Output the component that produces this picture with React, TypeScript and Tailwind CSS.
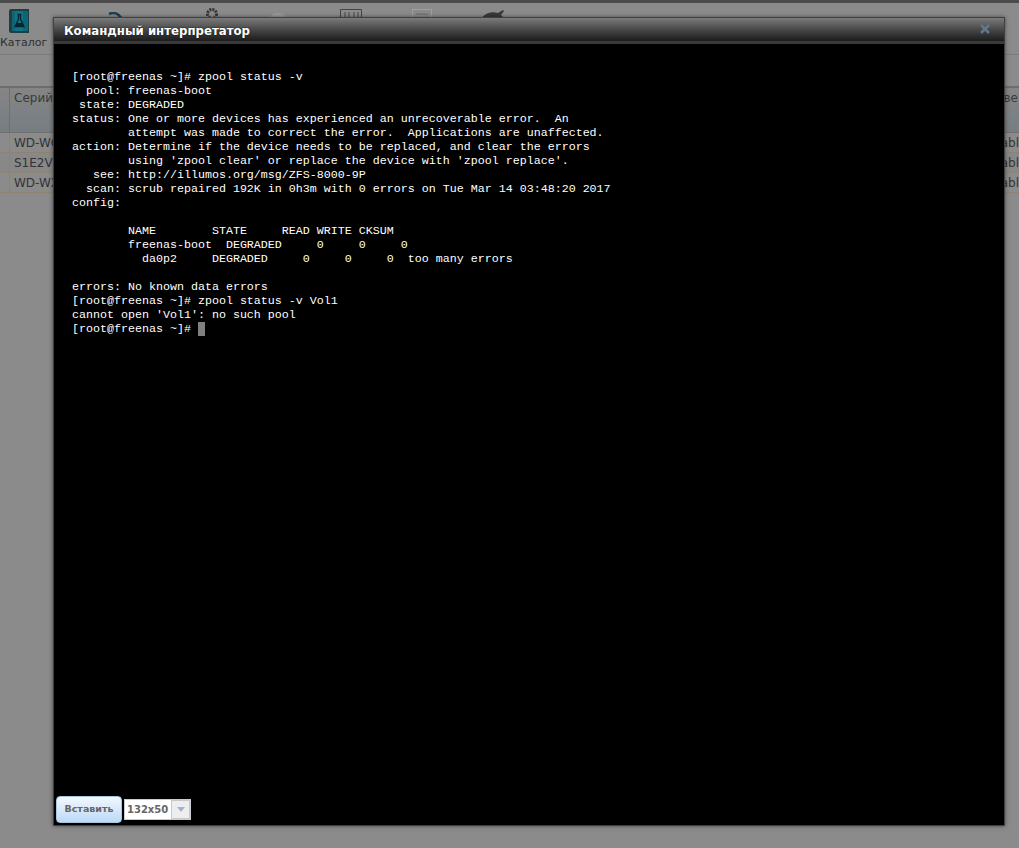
import React from 'react';

const terminalLines = [
  '[root@freenas ~]# zpool status -v',
  '  pool: freenas-boot',
  ' state: DEGRADED',
  'status: One or more devices has experienced an unrecoverable error.  An',
  '        attempt was made to correct the error.  Applications are unaffected.',
  'action: Determine if the device needs to be replaced, and clear the errors',
  "        using 'zpool clear' or replace the device with 'zpool replace'.",
  '   see: http://illumos.org/msg/ZFS-8000-9P',
  '  scan: scrub repaired 192K in 0h3m with 0 errors on Tue Mar 14 03:48:20 2017',
  'config:',
  '',
  '        NAME        STATE     READ WRITE CKSUM',
  '        freenas-boot  DEGRADED     0     0     0',
  '          da0p2     DEGRADED     0     0     0  too many errors',
  '',
  'errors: No known data errors',
  '[root@freenas ~]# zpool status -v Vol1',
  "cannot open 'Vol1': no such pool",
];

const rows = [
  { serial: 'WD-WC', bg: 'bg-[#8b8b8b]' },
  { serial: 'S1E2VI', bg: 'bg-[#888888]' },
  { serial: 'WD-WX', bg: 'bg-[#8b8b8b]' },
];

const CatalogIcon = () => (
  <svg width="20" height="24" viewBox="0 0 20 24" className="ml-[9px]">
    <path d="M2 0h18v24H2a2 2 0 0 1-2-2V2a2 2 0 0 1 2-2z" fill="#1c3f40" />
    <rect x="3" y="2" width="16" height="20" fill="#0e6478" />
    <rect x="6" y="2" width="8" height="20" fill="#127f95" opacity="0.6" />
    <path d="M8.5 5.5h4M9.500 5.500v4.500L6 17.500h9L11.500 10V5.500" fill="none" stroke="#07242c" strokeWidth="1.300" />
    <path d="M8 14h5l2 3.500H6z" fill="#07242c" />
  </svg>
);

// the toolbar icons that stick out above the dialog
const ToolbarPeeks = () => (
  <div className="flex h-[14px] ml-[108px] items-start">
    <svg width="16" height="8" viewBox="0 0 16 8" className="mt-[3px]">
      <path d="M1 2c5-2 10-1 13 6" fill="none" stroke="#1f3e52" strokeWidth="2.500" />
    </svg>
    <svg width="14" height="14" viewBox="0 0 14 14" className="ml-[81px] -mt-[2px]">
      <circle cx="7" cy="7" r="4.500" fill="none" stroke="#333333" strokeWidth="3" strokeDasharray="2 1" />
    </svg>
    <div className="ml-[51px] mt-[4px] w-[16px] h-[8px] rounded-t-md bg-[#9a9a9a]" />
    <svg width="22" height="12" viewBox="0 0 22 12" className="ml-[54px]">
      <path d="M.5 12V.5h21V12M5 3v9M9 3v9M14 3v9M18 3v9" fill="none" stroke="#444444" />
    </svg>
    <div className="ml-[50px] w-[20px] h-[10px] border border-[#9f9f9f] p-[3px]">
      <div className="h-full bg-[#7a7a7a]" />
    </div>
    <svg width="24" height="8" viewBox="0 0 24 8" className="ml-[50px] mt-[1px]">
      <path d="M0 8C3 3 10 1 16 3l5-3 1 1-3 4 3 3z" fill="#3a3a3a" />
    </svg>
  </div>
);

export default function App() {
  return (
    <div className="relative w-[1019px] h-[848px] overflow-hidden bg-[#8b8b8b] font-['DejaVu_Sans',sans-serif]">
      {/* page behind the overlay */}
      <div className="h-[3px] bg-[#4c4c4c]" />
      <div className="relative h-[52px] pt-[6px] border-b border-[#7c7c7c] bg-[#8b8b8b]">
        <ToolbarPeeks />
        <div className="absolute left-0 top-[6px] flex flex-col items-start w-[46px]">
          <CatalogIcon />
          <span className="mt-[2px] text-[11px] leading-[16px] whitespace-nowrap text-[#2f2f2f]">Каталог</span>
        </div>
      </div>
      <div className="mt-[31px] border-t-2 border-[#6d6d6d]">
        <div className="flex h-[45px] bg-gradient-to-b from-[#858585] to-[#767e82] border-b border-[#6f6f6f]">
          <div className="w-[10px] border-r border-[#6f6f6f]" />
          <div className="flex-1 pl-[4px] pt-[2px] text-[12px] leading-[16px] text-[#3a3a3a]">Серийный</div>
          <div className="w-[30px] text-right pr-[1px] pt-[2px] text-[12px] leading-[16px] text-[#3a3a3a]">ове</div>
        </div>
        {rows.map(row => (
          <div key={row.serial} className={`flex h-[20px] border-b border-[#8f8270] ${row.bg}`}>
            <div className="w-[10px] border-r border-[#8f8270]" />
            <div className="flex-1 pl-[4px] text-[12px] leading-[21px] text-[#333333]">{row.serial}</div>
            <div className="w-[30px] text-right text-[12px] leading-[21px] text-[#333333]">abl</div>
          </div>
        ))}
      </div>

      {/* shell dialog */}
      <div className="absolute left-[53px] top-[17px] w-[952px] h-[809px] flex flex-col border border-[#404040] bg-black shadow-[0_0_4px_rgba(0,0,0,0.5)]">
        <div className="relative h-[26px] shrink-0 border-b-[3px] border-[#3a3a3a] bg-gradient-to-b from-[#7b7b7b] to-[#1c1c1c] pl-[10px]">
          <span className="text-[11.75px] leading-[25px] font-bold text-white [text-shadow:0_0_2px_rgba(0,0,0,0.8)]">Командный интерпретатор</span>
          <svg width="10" height="10" viewBox="0 0 10 10" className="absolute right-[14px] top-[6px]">
            <path d="M1 1l8 8M9 1l-8 8" fill="none" stroke="#64778a" strokeWidth="2.500" />
          </svg>
        </div>
        <div className="flex-1 pl-[18px] pt-[26px] whitespace-pre font-['Liberation_Mono',monospace] text-[11.67px] leading-[14px] text-white">
          {terminalLines.map((line, i) => (
            <div key={i} className="h-[14px]">{line}</div>
          ))}
          <div className="flex h-[14px]">
            <span>{'[root@freenas ~]# '}</span>
            <span className="w-[7px] h-[14px] bg-[#7f7f7f]" />
          </div>
        </div>
        <div className="flex items-center h-[30px] shrink-0 pb-[2px] pl-[2px]">
          <button className="w-[66px] h-[27px] rounded-[4px] border border-[#a9c4de] bg-gradient-to-b from-[#f3f8fe] to-[#bcd9f6] text-[9.5px] font-bold text-[#666666]">Вставить</button>
          <div className="ml-[2px] flex h-[21px] w-[67px] border border-[#c6cdd8] bg-white">
            <span className="w-[46px] pl-[2px] text-[10px] leading-[19px] font-bold text-[#666666]">132x50</span>
            <span className="flex-1 flex items-center justify-center border border-[#c9c9c9] bg-[#eeeeee]">
              <svg width="8" height="5" viewBox="0 0 8 5"><path d="M0 0h8L4 5z" fill="#9fb3cd" /></svg>
            </span>
          </div>
        </div>
      </div>
    </div>
  );
}
